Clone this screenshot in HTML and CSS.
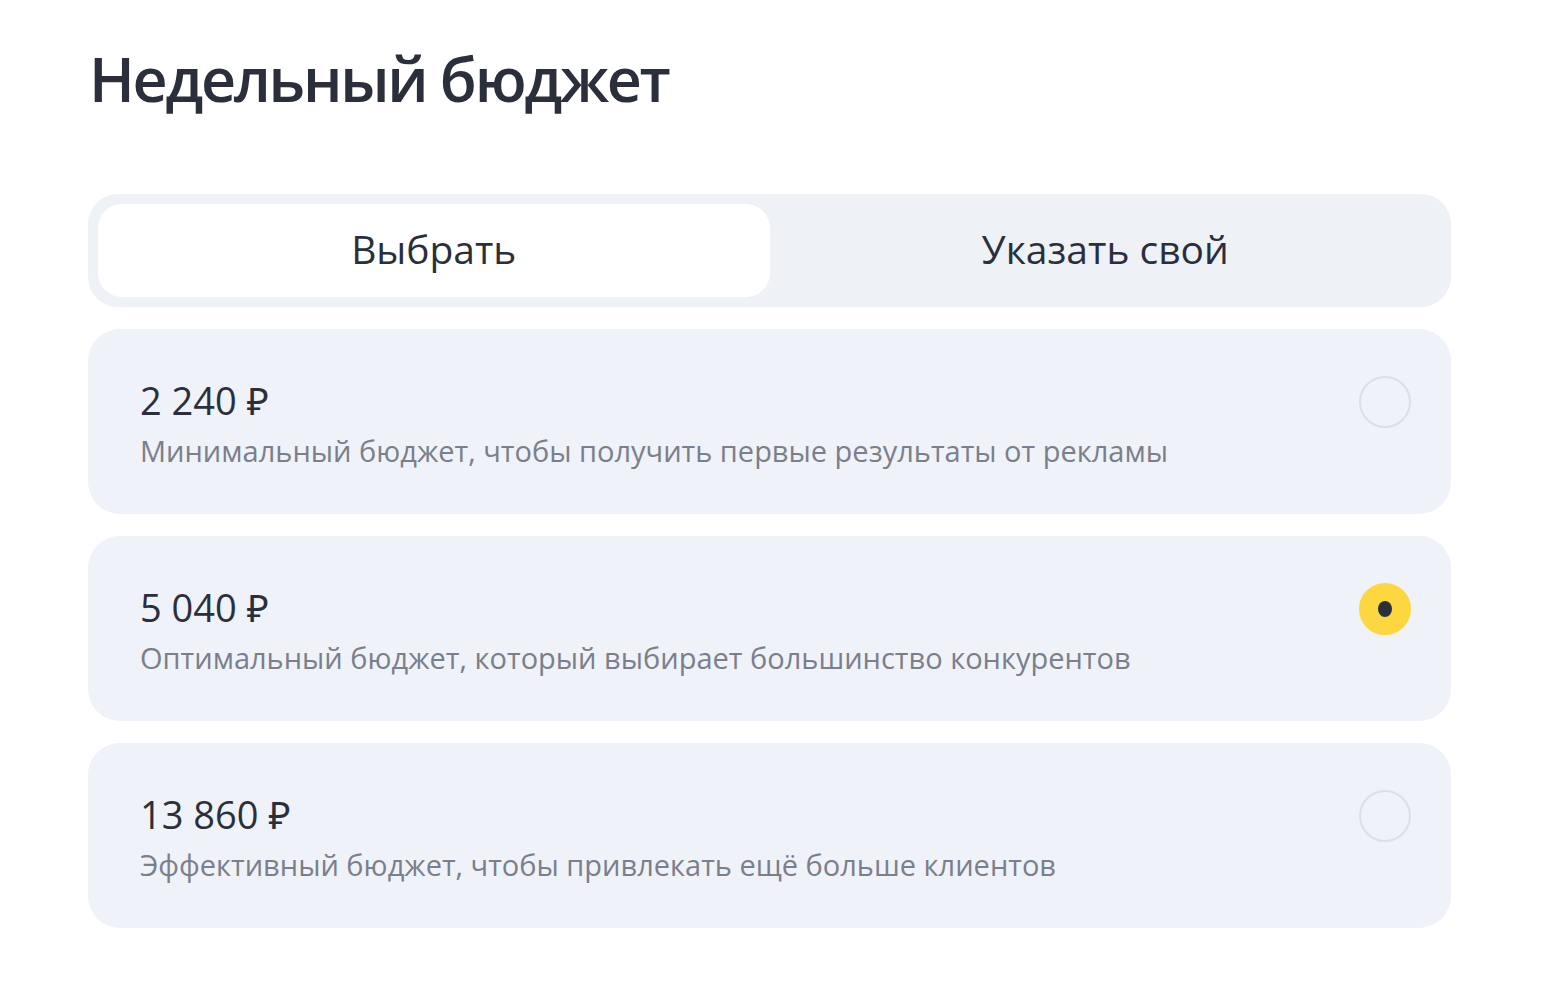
FILE: index.html
```html
<!DOCTYPE html>
<html lang="ru">
<head>
  <meta charset="UTF-8">
  <title>Недельный бюджет</title>
  <meta name="viewport" content="width=device-width, initial-scale=1.0">
  <link rel="stylesheet" href="styles.css">
</head>
<body>
  <div class="budget">
    <h1 class="budget-title">Недельный бюджет</h1>

    <div class="tabs">
      <button class="tab tab-active" type="button">Выбрать</button>
      <button class="tab" type="button">Указать свой</button>
    </div>

    <div class="options">
      <label class="option">
        <div class="option-text">
          <div class="option-price">2 240 ₽</div>
          <div class="option-desc">Минимальный бюджет, чтобы получить первые результаты от рекламы</div>
        </div>
        <span class="radio"></span>
      </label>

      <label class="option">
        <div class="option-text">
          <div class="option-price">5 040 ₽</div>
          <div class="option-desc">Оптимальный бюджет, который выбирает большинство конкурентов</div>
        </div>
        <span class="radio radio-checked"></span>
      </label>

      <label class="option">
        <div class="option-text">
          <div class="option-price">13 860 ₽</div>
          <div class="option-desc">Эффективный бюджет, чтобы привлекать ещё больше клиентов</div>
        </div>
        <span class="radio"></span>
      </label>
    </div>
  </div>
</body>
</html>
```

FILE: styles.css
```css
body {
  margin: 0;
  padding: 0;
  background: #fff;
  color: #2b2f3b;
  font-family: 'Open Sans', 'Noto Sans', Arial, sans-serif;
}
.budget {
  width: 1363px;
  padding: 36px 0 0 88px;
}
.budget-title {
  margin: 0 0 72px 1px;
  font-size: 61px;
  font-weight: 600;
  line-height: 86px;
  letter-spacing: -2.3px;
  color: #2b2f3b;
}
.tabs {
  display: flex;
  padding: 10px;
  background: #eef1f6;
  border-radius: 30px;
  margin-bottom: 22px;
}
.tab {
  flex: 1;
  height: 93px;
  padding: 0 0 4px;
  border: none;
  background: transparent;
  border-radius: 24px;
  font-family: inherit;
  font-size: 39px;
  color: #2b2f3b;
  cursor: pointer;
}
.tab-active {
  background: #fff;
}
.options {
  display: flex;
  flex-direction: column;
  gap: 22px;
}
.option {
  display: flex;
  align-items: flex-start;
  justify-content: space-between;
  height: 185px;
  padding: 46px 41px 0 52px;
  box-sizing: border-box;
  background: #eff2f8;
  border-radius: 32px;
  cursor: pointer;
}
.option-price {
  font-size: 38px;
  line-height: 50px;
  color: #2b2f3b;
}
.option-desc {
  margin-top: 7px;
  font-size: 29px;
  line-height: 38px;
  color: #7b7f8b;
}
.radio {
  width: 48px;
  height: 48px;
  margin: 1px -1px 0 0;
  border: 2px solid #dcdfe6;
  border-radius: 50%;
  display: flex;
  align-items: center;
  justify-content: center;
}
.radio-checked {
  background: #fdd73f;
  border-color: #fdd73f;
}
.radio-checked::after {
  content: '';
  width: 14px;
  height: 16px;
  border-radius: 50%;
  background: #2b2f3b;
}
```
